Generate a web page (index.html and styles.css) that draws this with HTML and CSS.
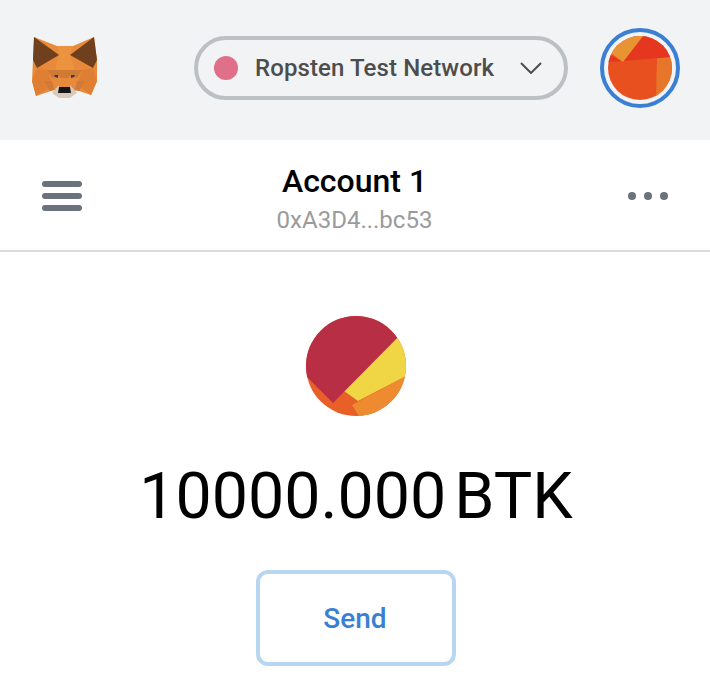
FILE: index.html
```html
<!DOCTYPE html>
<html lang="en">
<head>
<meta charset="utf-8">
<title>MetaMask</title>
<link rel="stylesheet" href="styles.css">
</head>
<body>
<header class="topbar">
  <svg class="fox" viewBox="30 35 70 66" aria-label="MetaMask">
    <polygon fill="#e88a3a" points="34,37 57,46 73,46 94,37 97,60 97,81 91,95 76,90 73,94 57,94 54,90 36,96 32,81 33,60"/>
    <polygon fill="#6f3f1e" points="34,37 59,55 37,68 33,60"/>
    <polygon fill="#6f3f1e" points="94,37 70,55 93,68 97,60"/>
    <polygon fill="#ec9340" points="57,46 73,46 70,55 75,70 55,70 59,55"/>
    <polygon fill="#de7f33" points="37,68 47,70 53,85 36,96 32,81"/>
    <polygon fill="#de7f33" points="93,68 82,70 77,85 91,95 97,81"/>
    <polygon fill="#d07a33" points="47,70 82,70 77,78 52,78"/>
    <polygon fill="#e88a3a" points="52,78 60,76 60,88 55,90"/>
    <polygon fill="#e88a3a" points="77,78 69,76 69,88 74,90"/>
    <polygon fill="#cf7a3c" points="44,81 52,81 54,90 50,91"/>
    <polygon fill="#cf7a3c" points="85,81 77,81 75,90 79,91"/>
    <polygon fill="#d8c9b8" points="52,93 59,85 59,89 70,89 70,85 77,93 70,98 59,98"/>
    <polygon fill="#17171b" points="59,87 70,87 71,93 58,93"/>
    <polygon fill="#2a3a66" points="54,75 58,75 58,78 55,77"/>
    <polygon fill="#2a3a66" points="75,75 71,75 71,78 74,77"/>
  </svg>
  <button class="network" type="button">
    <span class="network-dot"></span>
    <span class="network-name">Ropsten Test Network</span>
    <svg class="chevron" viewBox="0 0 22 12"><polyline points="1,1 11,11 21,1"/></svg>
  </button>
  <div class="account-ring">
    <svg class="identicon-small" viewBox="0 0 64 64">
      <rect width="64" height="64" fill="#e8511f"/>
      <polygon fill="#e7762b" points="49,20 64,20 64,64 48,64"/>
      <polygon fill="#e5361f" points="0,18 15,26 35,0 64,0 64,21 16,25 0,26"/>
      <polygon fill="#e89432" points="0,0 35,0 15,26 0,15"/>
    </svg>
  </div>
</header>
<section class="account-bar">
  <div class="menu-icon"><span></span><span></span><span></span></div>
  <div class="account-info">
    <div class="account-name">Account 1</div>
    <div class="account-address">0xA3D4...bc53</div>
  </div>
  <div class="more-icon"><span></span><span></span><span></span></div>
</section>
<main class="asset">
  <svg class="identicon-large" viewBox="0 0 100 100">
    <rect width="100" height="100" fill="#e85f27"/>
    <polygon fill="#ee8b31" points="46,89 100,60 100,100 53,100"/>
    <polygon fill="#f0d544" points="91,22 100,22 100,60 52,85 38,75"/>
    <polygon fill="#b82e45" points="0,0 100,0 91,22 27,87 0,60"/>
  </svg>
  <div class="balance"><span>10000.000</span><span>BTK</span></div>
  <button class="send" type="button">Send</button>
</main>
</body>
</html>
```
FILE: styles.css
```css
* { box-sizing: border-box; }
html, body { margin: 0; padding: 0; }
body {
  width: 710px;
  height: 682px;
  overflow: hidden;
  background: #fff;
  font-family: Roboto, sans-serif;
}
.topbar {
  height: 140px;
  background: #f2f3f4;
  display: flex;
  align-items: center;
  padding: 0 30px 4px 30px;
}
.fox { width: 70px; height: 66px; flex: none; }
.network {
  margin-left: 94px;
  width: 374px;
  height: 64px;
  border: 4px solid #bbc0c5;
  border-radius: 32px;
  background: transparent;
  display: flex;
  align-items: center;
  padding: 0 22px 0 16px;
  font-family: inherit;
}
.network-dot {
  width: 24px;
  height: 24px;
  border-radius: 50%;
  background: #e06f89;
  flex: none;
}
.network-name {
  margin-left: 17px;
  font-size: 24px;
  font-weight: 500;
  letter-spacing: 0.1px;
  color: #4d4d4d;
  white-space: nowrap;
}
.chevron { width: 22px; height: 12px; margin-left: auto; flex: none; }
.chevron polyline { fill: none; stroke: #4d4d4d; stroke-width: 2; }
.account-ring {
  margin-left: 32px;
  width: 80px;
  height: 80px;
  border: 4px solid #3a7fd3;
  border-radius: 50%;
  padding: 4px;
  flex: none;
}
.identicon-small { display: block; width: 64px; height: 64px; border-radius: 50%; }
.account-bar {
  height: 112px;
  border-bottom: 2px solid #d9dbdd;
  display: flex;
  align-items: center;
  justify-content: space-between;
  padding: 0 42px;
}
.menu-icon { display: flex; flex-direction: column; gap: 6px; width: 40px; margin-top: 1px; }
.menu-icon span { display: block; height: 6px; border-radius: 3px; background: #6a737d; }
.account-info { text-align: center; padding-top: 10px; padding-right: 1px; }
.account-name { font-size: 32px; font-weight: 500; line-height: 40px; color: #000; }
.account-address { font-size: 24px; line-height: 38px; color: #9b9b9b; }
.more-icon { display: flex; gap: 8px; width: 40px; margin-top: 1px; }
.more-icon span { width: 8px; height: 8px; border-radius: 50%; background: #6a737d; }
.asset { display: flex; flex-direction: column; align-items: center; padding: 64px 0 0 2px; }
.identicon-large { display: block; width: 100px; height: 100px; border-radius: 50%; }
.balance {
  margin-top: 32px;
  display: flex;
  gap: 8px;
  font-size: 64.5px;
  line-height: 96px;
  color: #000;
}
.send {
  margin-top: 26px;
  width: 200px;
  height: 96px;
  border: 4px solid #b7d6f1;
  border-radius: 12px;
  background: #fff;
  padding: 0 2px 0 0;
  font-family: inherit;
  font-size: 28px;
  font-weight: 500;
  color: #3a7fd3;
}
```
